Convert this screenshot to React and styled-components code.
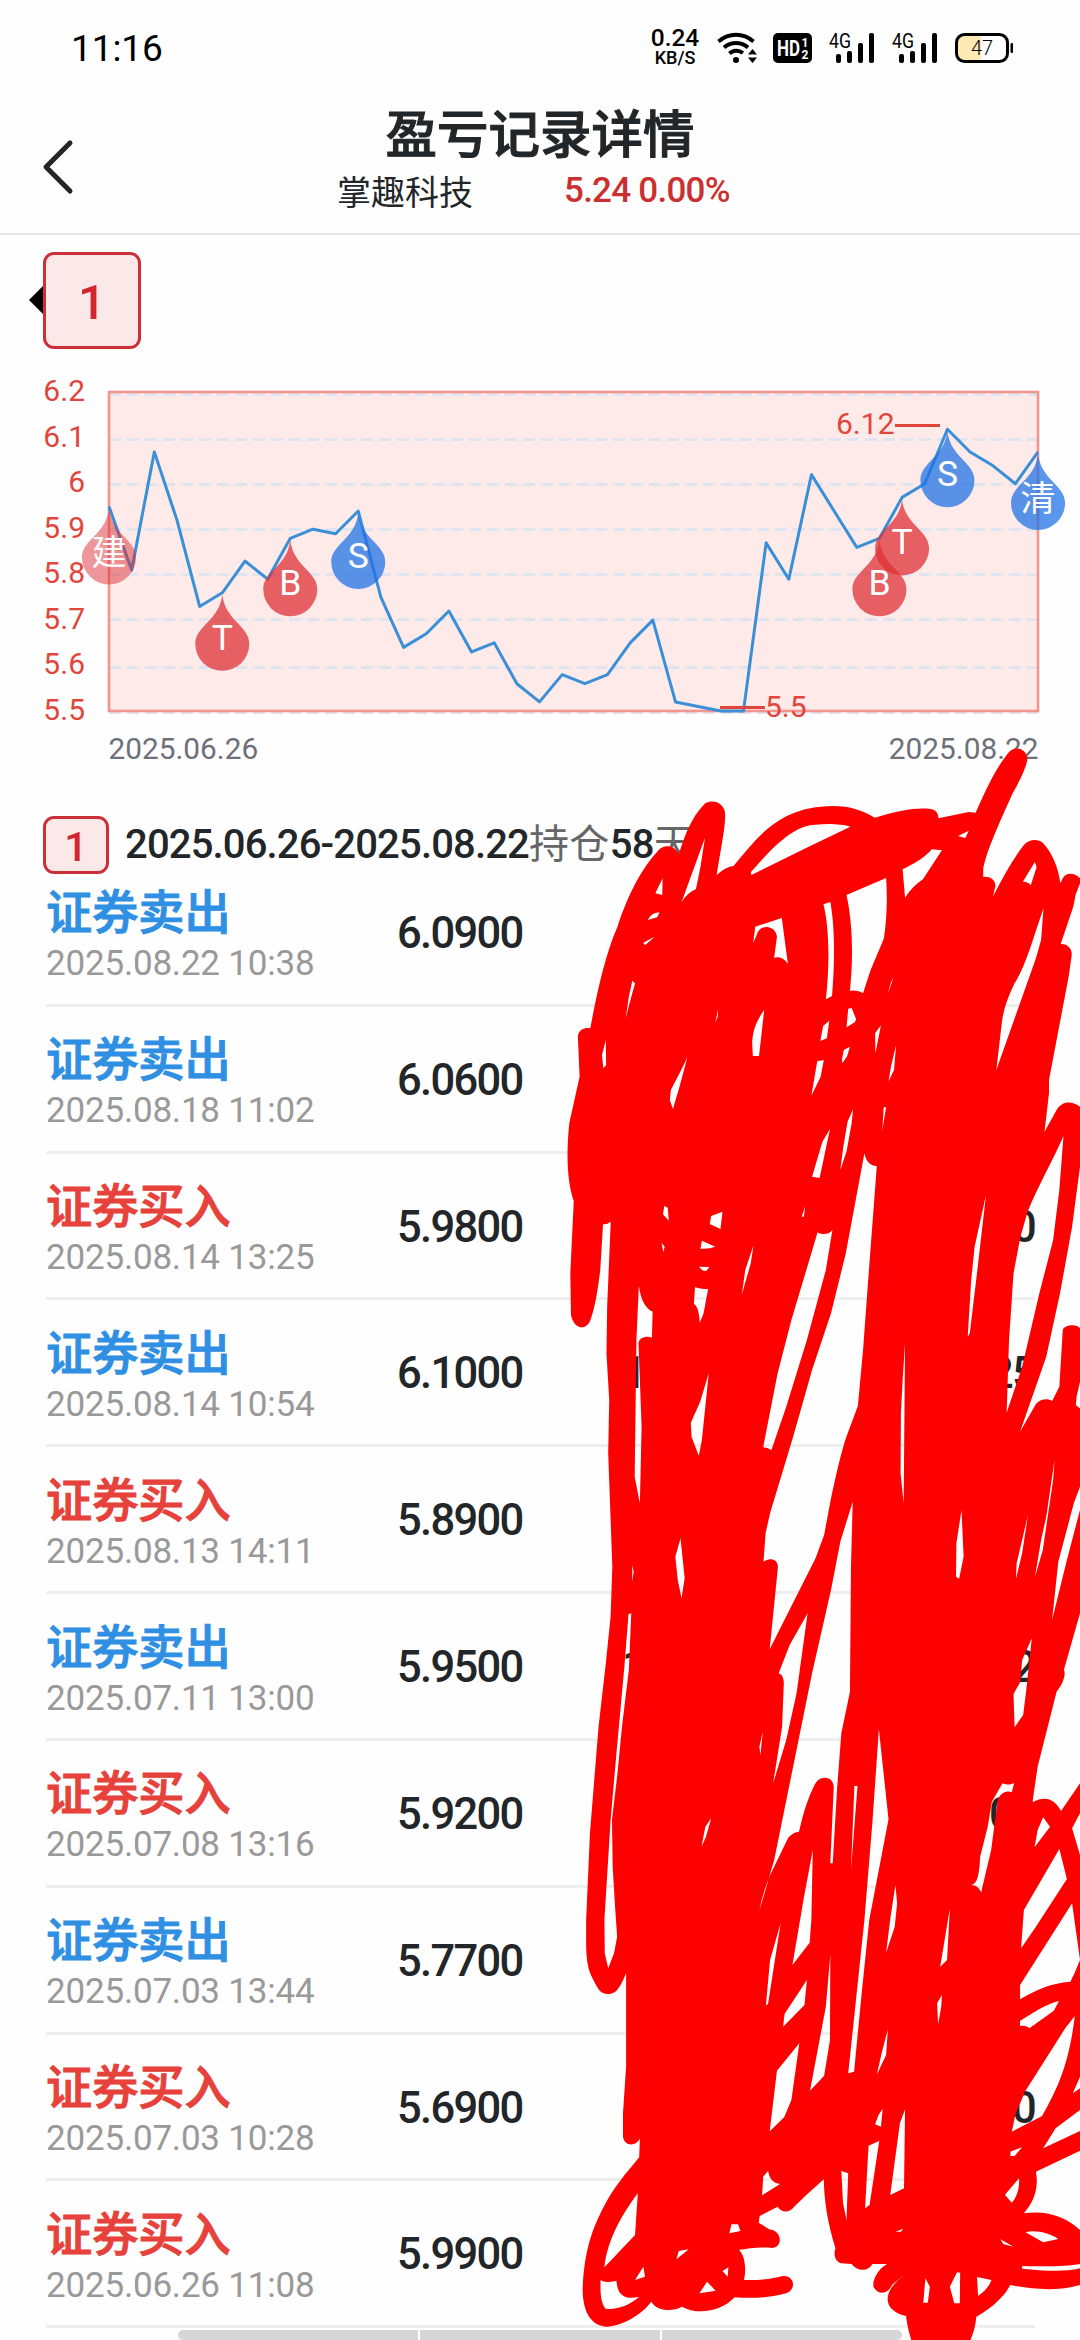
import React from "react"
import styled, { createGlobalStyle } from "styled-components"

const GlobalStyle = createGlobalStyle`
  * {
    box-sizing: border-box;
  }
  body {
    margin: 0;
    background-color: #fefefe;
    font-family: Roboto, "Noto Sans CJK SC", sans-serif;
    color: #222628;
  }
`

const Page = styled.main`
  position: relative;
  width: 1080px;
  height: 2340px;
  overflow: hidden;
  background-color: #fefefe;
  display: flex;
  flex-direction: column;

  > * {
    flex: none;
  }
`

/* status bar */

const StatusBar = styled.div`
  height: 96px;
  padding: 0 67px 0 71px;
  display: flex;
  align-items: center;
  justify-content: space-between;
  color: #000;
`
const Clock = styled.span`
  font-size: 37px;
  letter-spacing: -0.1px;
`
const StatusIcons = styled.div`
  display: flex;
  align-items: center;

  svg {
    display: block;
    overflow: visible;
  }
`
const NetSpeed = styled.div`
  width: 50px;
  margin-right: 17px;
  display: flex;
  flex-direction: column;
  align-items: center;
  font-weight: 500;
  font-size: 24.5px;
  line-height: 18px;

  small {
    margin-top: 2px;
    font-size: 18px;
    line-height: 18px;
  }
`
const Signal = styled.svg`
  margin-left: 17px;
`
const HdBadge = styled.svg`
  margin-left: 15px;
`
const Battery = styled.svg`
  margin-left: 17px;
`

/* header */

const Header = styled.header`
  height: 139px;
  border-bottom: 2px solid #e4e4e4;
  display: grid;
  grid-template-columns: 120px 1fr 120px;
`
const Back = styled.button`
  border: 0;
  background: none;
  padding: 41px 0 0 40px;
  text-align: left;
  height: 100px;

  svg {
    display: block;
  }
`
const Heading = styled.div`
  display: flex;
  flex-direction: column;
  align-items: center;

  h1 {
    margin: 10px 0 0;
    font-size: 51.5px;
    line-height: 60px;
    font-weight: 500;
    -webkit-text-stroke: 1px currentColor;
  }
`
const Quote = styled.div`
  display: flex;
  align-items: center;
  width: 406px;
  height: 48px;
  font-size: 34px;

  b {
    margin-left: 91px;
    font-size: 35px;
    font-weight: 500;
    letter-spacing: -0.75px;
    color: #c9302f;
    white-space: nowrap;
  }
`

/* position tabs */

const Tabs = styled.div`
  height: 136px;
  padding: 17px 0 0 29px;
  display: flex;
  align-items: flex-start;
`
const TabArrow = styled.span`
  width: 0;
  height: 0;
  margin-top: 34px;
  border: 14px solid transparent;
  border-left: 0;
  border-right-color: #000;
`
const Badge = styled.span`
  flex: none;
  display: flex;
  align-items: center;
  justify-content: center;
  width: ${(p) => (p.$small ? 66 : 98)}px;
  height: ${(p) => (p.$small ? 58 : 97)}px;
  padding-top: ${(p) => (p.$small ? 4 : 3)}px;
  border: 3px solid #c9303a;
  border-radius: 11px;
  background-color: #fbe8e9;
  color: #d4252e;
  font-size: ${(p) => (p.$small ? 41 : 49)}px;
  font-weight: 500;
  line-height: 1;
`

const ChartSvg = styled.svg`
  display: block;
`

/* list */

const Summary = styled.div`
  height: 59px;
  padding: 15px 0 0 43px;
  display: flex;
  align-items: flex-start;
`
const Range = styled.p`
  margin: 0 0 0 16px;
  font-size: 40px;
  line-height: 58px;
  font-weight: 500;
  letter-spacing: -0.85px;
  white-space: nowrap;

  span {
    font-weight: 400;
    letter-spacing: 0.4px;
    color: #666;
  }
`
const List = styled.ul`
  margin: 0 45px 0 46px;
  padding: 0;
  list-style: none;
`
const Row = styled.li`
  height: 146.84px;
  padding-top: 3px;
  border-bottom: 3px solid #eee;
  display: grid;
  grid-template-columns: 351px 225px 1fr 1fr;
  align-items: center;
`
const Kind = styled.div`
  display: flex;
  flex-direction: column;
  margin-top: 6px;

  strong {
    font-size: 46.2px;
    line-height: 56px;
    font-weight: 500;
    color: ${(p) => (p.$sell ? "#2f8fe2" : "#e6413a")};
    -webkit-text-stroke: 1px currentColor;
  }
  time {
    font-size: 35px;
    line-height: 46px;
    letter-spacing: -0.2px;
    color: #999;
  }
`
const Num = styled.span`
  font-size: 43.5px;
  font-weight: 500;
  letter-spacing: -1.7px;
  text-align: ${(p) => (p.$end ? "right" : "left")};
`

const BottomBar = styled.div`
  width: 724px;
  height: 10px;
  margin: 2px 0 0 178px;
  display: grid;
  grid-template-columns: repeat(3, 1fr);
  gap: 2px;
  border-radius: 5px;
  overflow: hidden;

  i {
    background-color: #d6d6d6;
  }
`

const InkLayer = styled.svg`
  position: absolute;
  left: 540px;
  top: 740px;
  width: 540px;
  height: 1600px;
`

const prices = [
  5.95, 5.81, 6.07, 5.92, 5.73, 5.76, 5.83, 5.79, 5.88, 5.9, 5.89, 5.94, 5.75,
  5.64, 5.67, 5.72, 5.63, 5.65, 5.56, 5.52, 5.58, 5.56, 5.58, 5.65, 5.7, 5.52,
  5.51, 5.5, 5.5, 5.87, 5.79, 6.02, 5.94, 5.86, 5.88, 5.97, 6.0, 6.12, 6.07,
  6.04, 6.0, 6.07,
]
const marks = [
  { i: 0, text: "建", color: "#dd2f35", opacity: 0.5 },
  { i: 5, text: "T", color: "#dd2f35" },
  { i: 8, text: "B", color: "#dd2f35" },
  { i: 11, text: "S", color: "#1f71e6" },
  { i: 34, text: "B", color: "#dd2f35" },
  { i: 35, text: "T", color: "#dd2f35" },
  { i: 37, text: "S", color: "#1f71e6" },
  { i: 41, text: "清", color: "#1f71e6" },
]
const ticks = ["6.2", "6.1", "6", "5.9", "5.8", "5.7", "5.6", "5.5"]
const gridY = [23.5, 68.5, 113.5, 158.5, 203.5, 248.5, 296.5, 341.5]

const px = (i) => 109 + i * 22.66
const py = (p) => 340 - (p - 5.5) * 454.5

const Chart = () => (
  <ChartSvg width="1080" height="430" viewBox="0 0 1080 430">
    <rect x="109" y="21" width="929" height="319" fill="#feeae9" />
    {gridY.map((y) => (
      <line
        key={y}
        x1="109"
        x2="1038"
        y1={y}
        y2={y}
        stroke="#dfe4f0"
        strokeWidth="3"
        strokeDasharray="12 6"
      />
    ))}
    <rect
      x="109"
      y="21"
      width="929"
      height="319"
      fill="none"
      stroke="#f3958f"
      strokeWidth="2.6"
    />
    {ticks.map((t, i) => (
      <text
        key={t}
        x="85"
        y={30 + i * 45.55}
        textAnchor="end"
        fontSize="30"
        fill="#e0463b"
      >
        {t}
      </text>
    ))}
    <polyline
      points={prices.map((p, i) => `${px(i)},${py(p)}`).join(" ")}
      fill="none"
      stroke="#3a8fd6"
      strokeWidth="3"
      strokeLinejoin="round"
    />
    <g fill="#e0463b" fontSize="30">
      <text x="836" y="63">6.12</text>
      <rect x="895" y="53" width="45" height="3" />
      <rect x="720" y="335" width="45" height="3" />
      <text x="765" y="346">5.5</text>
    </g>
    {marks.map(({ i, text, color, opacity }) => (
      <g key={i} transform={`translate(${px(i)} ${py(prices[i])})`}>
        <path
          d="M0 2C3 28 27 33 27 51A27 27 0 0 1-27 51C-27 33-3 28 0 2Z"
          fill={color}
          opacity={opacity || 0.74}
        />
        <text
          y={text > "Z" ? 59 : 57}
          textAnchor="middle"
          fontSize={text > "Z" ? 35 : 35.5}
          fill="#fff"
        >
          {text}
        </text>
      </g>
    ))}
    <g fill="#6e7079" fontSize="29.8">
      <text x="108.5" y="388">2025.06.26</text>
      <text x="1038.5" y="388" textAnchor="end">2025.08.22</text>
    </g>
  </ChartSvg>
)

const records = [
  { sell: true, time: "2025.08.22 10:38", price: "6.0900" },
  { sell: true, time: "2025.08.18 11:02", price: "6.0600" },
  { sell: false, time: "2025.08.14 13:25", price: "5.9800", amount: "0" },
  { sell: true, time: "2025.08.14 10:54", price: "6.1000", count: "1", amount: "25" },
  { sell: false, time: "2025.08.13 14:11", price: "5.8900" },
  { sell: true, time: "2025.07.11 13:00", price: "5.9500", count: "1", amount: "2" },
  { sell: false, time: "2025.07.08 13:16", price: "5.9200", amount: "00" },
  { sell: true, time: "2025.07.03 13:44", price: "5.7700" },
  { sell: false, time: "2025.07.03 10:28", price: "5.6900", amount: "0" },
  { sell: false, time: "2025.06.26 11:08", price: "5.9900" },
]

// outline of the marker scribble, then the gaps left between its strokes
const inkOutline = `M146 865C165 760 190 640 225 560C260 450 300 380 345 330C360 313 390 315 403 342L410 320C430 260 450 220 480 190C500 178 530 185 537 215
C540 250 530 300 513 405Q540 380 562 378C640 280 700 200 850 198C900 198 940 212 972 233C1050 210 1090 202 1135 207C1150 210 1157 220 1157 235L1245 216L1265 218
C1290 160 1320 90 1360 38C1380 15 1415 25 1415 60C1412 80 1395 120 1370 165C1345 225 1300 320 1287 385L1287 411C1305 408 1325 420 1322 440L1315 470
C1345 410 1375 355 1405 315C1420 297 1445 295 1460 308C1485 335 1505 380 1511 430L1518 415C1525 398 1550 395 1568 415L1568 430L1555 465Q1550 500 1542 520L1512 612C1530 610 1545 625 1544 645
L1535 710L1478 1020L1478 1060L1465 1175L1500 1110C1515 1085 1540 1080 1568 1100L1568 1280L1545 1460L1510 1660L1470 1850L1394 2075L1440 1992C1455 1975 1475 1975 1487 1983
L1508 1940L1518 1770C1520 1755 1560 1750 1568 1765L1568 1925L1558 1970L1556 1996L1568 2005L1568 2240L1550 2290L1505 2465L1487 2640L1530 2460L1568 2310L1568 2620L1521 2790
C1528 2800 1520 2830 1500 2855L1445 3080L1430 3187C1470 3165 1495 3180 1513 3213L1568 3130L1568 4232L1440 4295C1450 4350 1430 4390 1405 4420C1480 4410 1530 4435 1568 4470
L1568 4635C1500 4655 1430 4648 1365 4635C1355 4660 1320 4700 1267 4730C1265 4755 1260 4775 1250 4800L1078 4800Q1066 4760 1063 4728C1030 4720 1005 4700 1010 4670
C1015 4640 1040 4620 1062 4600L1022 4635C1010 4665 980 4665 968 4640C965 4615 985 4585 1008 4572L965 4572C955 4595 920 4595 905 4572L875 4570C855 4565 852 4540 858 4525
C835 4450 825 4380 824 4318L770 4368L738 4400C725 4420 700 4418 690 4400L638 4428L635 4448L665 4468C705 4472 705 4522 675 4524C640 4520 600 4526 578 4530
C595 4545 600 4590 592 4620C640 4622 680 4615 705 4608C740 4605 745 4650 715 4660C660 4675 610 4675 565 4672C530 4712 460 4728 412 4700C385 4715 340 4715 323 4685
C290 4730 230 4760 190 4760C140 4755 122 4700 124 4640C130 4530 150 4470 185 4400C215 4340 250 4300 288 4252L290 4195C280 4220 245 4220 241 4190L241 4120L250 3980L250 3700
C240 3725 230 3745 222 3752C205 3768 180 3764 170 3748C145 3700 134 3690 134 3600L134 3540L145 3280L170 2960L190 2780L205 2630L210 2480L203 2280L198 2140L201 1980L193 1840
L195 1700L205 1455L205 1445Q195 1454 183 1453L175 1590C168 1650 160 1700 148 1735C138 1775 98 1770 90 1725L88 1600L98 1383C80 1330 75 1250 85 1150L115 1010L110 890C112 865 135 862 146 865Z`

const inkGaps = `M335 460L356 415L355 465ZM411 487L432 427L479 293L466 380L453 447Q425 460 411 487ZM313 540C320 525 335 515 347 518L340 532ZM300 608L333 590L305 616Z
M249 835L258 770L268 722L276 730L260 790ZM191 900L192 975L184 985L180 945ZM612 397C680 315 740 255 800 254C840 250 880 253 901 260L780 320L614 405ZM1214 288L1245 272L1235 294Z
M1053 388C1090 370 1120 350 1138 328L1167 331L1112 418Q1080 440 1060 473ZM890 465L1005 414C1010 480 1005 560 998 597L960 690L938 760Q925 750 900 752C910 650 908 550 890 465Z
M823 493L843 486C858 570 855 680 848 768L830 778C840 690 842 570 823 493ZM625 560L702 534L720 672C710 655 695 648 680 653L688 590C685 560 650 550 633 575L619 610Z
M651 810L636 948L618 948L616 905C618 870 630 840 651 810ZM517 808L516 830L509 848ZM428 952L405 1040L386 1107L377 1080L380 1050L410 990ZM895 806L905 804L918 838L914 847L890 862Z
M840 842L833 895L814 903L822 858ZM900 920L892 948L878 970L877 958L882 930ZM824 960L815 1010L788 1067L805 964ZM990 856L974 940L973 880ZM1034 915L1028 990L1012 1024L1020 975Z
M1462 505L1455 600L1440 655L1325 990L1342 840C1350 790 1365 760 1378 730C1410 680 1430 600 1462 505ZM1402 425L1437 366L1442 382L1425 436Q1418 425 1402 425ZM1005 1102L994 1170L998 1102Z
M1027 710L1010 762L1018 730ZM909 1108L905 1150L890 1235L872 1290L880 1225L893 1145ZM842 1167L812 1314L790 1310L820 1205Z
M942 1240C948 1268 960 1278 978 1278L958 1550L938 1830L923 1998L888 2095C868 2160 855 2230 844 2280L825 2385L800 2455L667 2728L691 2480C690 2455 665 2452 649 2465L655 2380L668 2320L700 2210L735 2090L790 1890L845 1720L888 1540L915 1390Z
M806 1477C815 1485 840 1485 849 1470L830 1590L775 1800L715 2000L672 2130Q660 2122 648 2122L690 1900L730 1740ZM1295 1365L1270 1590L1248 1780L1242 1790L1252 1620L1262 1520Z
M1520 1188C1490 1260 1440 1350 1415 1418L1395 1490L1375 1600L1362 1800L1355 2018L1400 1880L1450 1660L1490 1500L1508 1350ZM1060 1810L1056 2290L1047 2200L1048 2020L1053 1920Z
M620 1516L612 1570L586 1664L596 1590ZM497 1428L530 1415L524 1467L493 1452ZM470 1502L509 1520Q490 1528 466 1526ZM462 1580L491 1581Q480 1605 462 1580ZM450 1642Q470 1648 488 1648L475 1720L464 1748C462 1715 458 1700 447 1692Z
M361 1398L371 1403L374 1442L357 1423ZM287 1637C292 1675 305 1705 327 1715L325 1793C310 1787 288 1792 286 1810L295 2060L290 2290L275 2210L280 1800ZM490 1900L470 2100L461 2147L440 2090L438 2048L465 1985Z
M770 1398L766 1430L760 1430ZM353 1508L362 1520L358 1537Z
M908 2285L903 2480L900 2855L875 2980L863 3140L850 3370L843 3370L853 3140C850 3105 810 3105 797 3135Q770 3190 752 3275Q735 3275 720 3295L680 3380Q650 3440 637 3512L680 3360L735 3080L790 2800L845 2550L872 2405Z
M777 2620L745 2860L715 3000L677 3130L703 2960L708 2830C708 2810 700 2803 693 2800L725 2715ZM647 2975L640 3045L637 3020ZM408 2395L420 2515L411 2575L400 2520L393 2450Z
M257 2623L265 2620L258 2790L238 2960L225 3100L209 3240L211 3380L218 3500L224 3590L215 3640L198 3685L188 3640L187 3540L205 3240L222 3040L245 2780ZM268 2475L272 2495L268 2525Z
M984 2968L1012 3238L956 3540L935 3750L912 3995L895 4000L942 3540L965 3250ZM913 3138L922 3138L903 3390ZM1032 3435L1037 3490L1030 3560L1005 3638L1018 3530ZM1224 2310L1230 2450L1217 2516L1208 2510L1209 2410Z
M1417 2325L1400 2440L1382 2517L1384 2470ZM1494 2160L1490 2220L1460 2430L1437 2512L1455 2400L1470 2330ZM1428 2695L1412 2850L1403 2925L1378 2962L1375 2862L1395 2825L1400 2760Z
M1343 3130C1355 3136 1370 3134 1377 3128L1370 3157C1350 3148 1330 3165 1328 3190L1310 3330L1281 3457Q1272 3435 1252 3435C1270 3430 1275 3410 1278 3350L1300 3260L1312 3185ZM1461 3232L1481 3260L1436 3322L1445 3270Z
M497 3235L482 3290L469 3320L480 3260ZM792 3330L788 3540L783 3608L733 3675L765 3480ZM1190 3505L1182 3660L1162 3680L1175 3600ZM699 3548L662 3793L656 3795L668 3660ZM775 3720L768 3795L706 3860L710 3822Z
M843 3645L842 3900L825 4007L784 4052L830 3800ZM753 3910L730 4080L709 4132L667 4174L688 3992ZM1167 3765L1165 3800L1156 3853L1153 3790ZM1010 3868L1005 3945L978 4004L992 3940ZM995 4106L990 4160L973 4153L983 4125Z
M954 4217L985 4203L957 4395L944 4405ZM1060 4108L1057 4345L1017 4365L1045 4150ZM875 4293L895 4300L890 4440L880 4390ZM648 4310L662 4293Q668 4330 697 4332L645 4366ZM284 4360L276 4485L187 4582C195 4500 240 4420 284 4360Z
M176 4620C190 4630 210 4625 222 4622C225 4670 250 4680 288 4670C260 4695 225 4710 190 4706C178 4690 174 4660 176 4620ZM276 4620L300 4580L305 4610ZM485 4625L510 4652L463 4660ZM530 4593L547 4582L545 4610Z
M556 4453L575 4453L582 4473L550 4480ZM403 4533L432 4528L396 4558ZM1119 4615L1132 4640L1126 4688L1113 4688ZM1211 4597L1220 4598L1219 4690L1203 4690L1190 4640ZM1269 4611L1311 4620Q1300 4650 1272 4668Z
M1410 4477C1440 4468 1480 4480 1505 4497L1461 4507ZM1400 4578C1470 4580 1530 4580 1568 4572L1568 4585C1520 4597 1460 4592 1400 4586ZM1391 4315C1393 4345 1385 4370 1370 4388L1350 4364ZM1366 4235L1400 4222L1378 4248L1366 4248Z
M1032 4475L1055 4466L1048 4475ZM1337 4498L1375 4520L1345 4512ZM1545 3265L1568 3220L1568 3345ZM1508 3327L1530 3417L1440 3560L1397 3625L1405 3510ZM1545 3490L1568 3660L1552 3700L1540 3725C1480 3730 1440 3750 1394 3778L1394 3735Z
M1394 3842L1450 3807Q1480 3790 1507 3783L1492 3812L1422 3864Q1408 3855 1394 3858ZM1553 3828L1525 3865L1408 4055L1380 4125L1370 4175L1458 4128C1500 4050 1535 3980 1553 3828ZM1568 4010L1547 4060L1568 4045ZM1568 4110L1497 4165L1461 4225L1568 4173Z`

const SignalIcon = () => (
  <Signal width="46" height="30" viewBox="0 0 46 30">
    <text x="0" y="14.5" fontSize="19.5" textLength="22" lengthAdjust="spacingAndGlyphs">
      4G
    </text>
    <rect x="7" y="21" width="5" height="9" rx="2" />
    <rect x="18" y="18" width="5" height="12" rx="2" />
    <rect x="29" y="10" width="5" height="20" rx="2" />
    <rect x="40" y="0" width="5" height="30" rx="2" />
  </Signal>
)

const App = () => {
  return (
    <Page>
      <GlobalStyle />
      <StatusBar>
        <Clock>11:16</Clock>
        <StatusIcons>
          <NetSpeed>
            0.24
            <small>KB/S</small>
          </NetSpeed>
          <svg width="41" height="30" viewBox="0 0 41 30">
            <g fill="none" stroke="#000" strokeWidth="4">
              <path d="M1.5 8.5C12-.5 26-.5 36.5 8.5" />
              <path d="M7 14.5C14 8.5 24 8.5 31 14.5" />
              <path d="M12.5 20.5C16 17 22 17 26 20" />
            </g>
            <circle cx="19" cy="27" r="3" />
            <path d="M35.5 16L40 21.5H31ZM35.5 30L31 24.5H40Z" />
            <circle cx="35.5" cy="23" r="1.4" fill="#fff" />
          </svg>
          <HdBadge width="39" height="30" viewBox="0 0 39 30">
            <rect width="39" height="30" rx="5" />
            <g fill="#fff" fontWeight="700">
              <text x="4" y="23" fontSize="22" textLength="23" lengthAdjust="spacingAndGlyphs">
                HD
              </text>
              <text x="28.5" y="13.5" fontSize="12">1</text>
              <text x="28.5" y="25.5" fontSize="12">2</text>
            </g>
          </HdBadge>
          <SignalIcon />
          <SignalIcon />
          <Battery width="58" height="30" viewBox="0 0 58 30">
            <rect x="3" y="2" width="23" height="26" fill="#ffeab5" />
            <rect x="1.5" y="1.5" width="51" height="27" rx="8" fill="none" stroke="#000" strokeWidth="3" />
            <rect x="55.5" y="10" width="2.5" height="10" rx="1" />
            <text x="27" y="22" textAnchor="middle" fontSize="20" fontWeight="300">47</text>
          </Battery>
        </StatusIcons>
      </StatusBar>

      <Header>
        <Back aria-label="返回">
          <svg width="36" height="58" viewBox="0 0 36 58">
            <path
              d="M30 5L6 29L30 53"
              fill="none"
              stroke="#222628"
              strokeWidth="5"
              strokeLinecap="round"
              strokeLinejoin="round"
            />
          </svg>
        </Back>
        <Heading>
          <h1>盈亏记录详情</h1>
          <Quote>
            掌趣科技<b>5.24 0.00%</b>
          </Quote>
        </Heading>
      </Header>

      <Tabs>
        <TabArrow />
        <Badge>1</Badge>
      </Tabs>

      <Chart />

      <Summary>
        <Badge $small>1</Badge>
        <Range>
          2025.06.26-2025.08.22<span>持仓</span>58<span>天</span>
        </Range>
      </Summary>

      <List>
        {records.map((r) => (
          <Row key={r.time}>
            <Kind $sell={r.sell}>
              <strong>{r.sell ? "证券卖出" : "证券买入"}</strong>
              <time>{r.time}</time>
            </Kind>
            <Num>{r.price}</Num>
            <Num>{r.count}</Num>
            <Num $end>{r.amount}</Num>
          </Row>
        ))}
      </List>

      <BottomBar>
        <i />
        <i />
        <i />
      </BottomBar>

      <InkLayer viewBox="0 0 1568 4800" preserveAspectRatio="none">
        <path d={inkOutline + inkGaps} fill="#f00" fillRule="evenodd" />
      </InkLayer>
    </Page>
  )
}

export default App
